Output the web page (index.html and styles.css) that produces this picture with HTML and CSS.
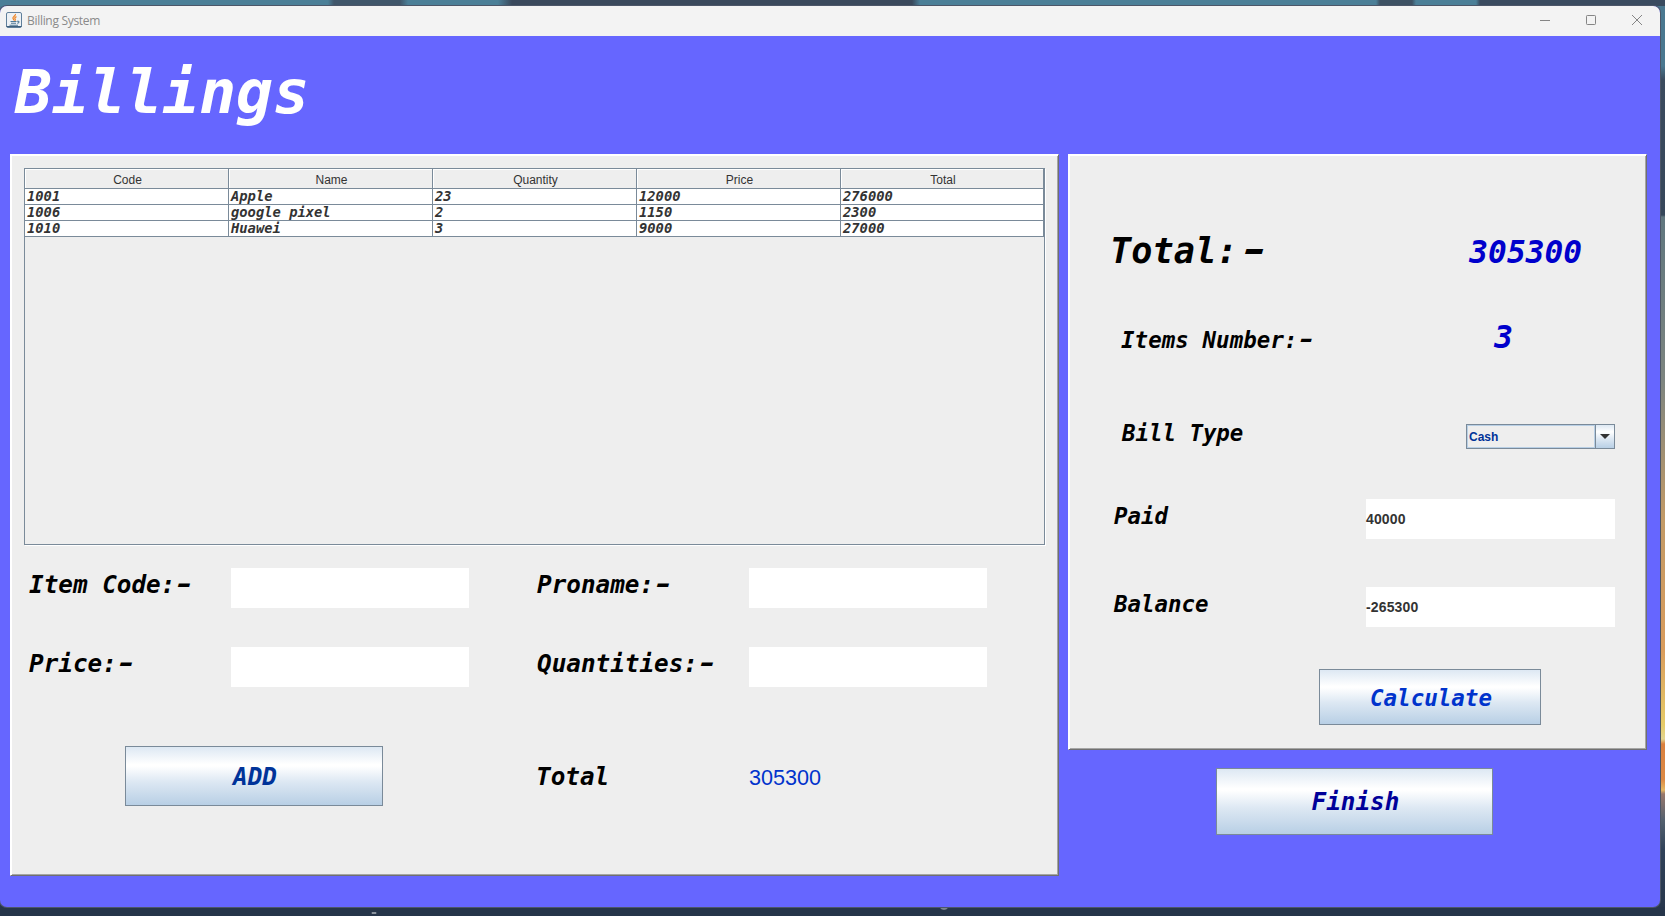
FILE: index.html
```html
<!DOCTYPE html>
<html lang="en">
<head>
<meta charset="utf-8">
<title>Billing System</title>
<link rel="stylesheet" href="styles.css">
</head>
<body>
<div class="desktop">
  <div class="window">
    <header class="titlebar">
      <svg class="app-icon" width="16" height="16" viewBox="0 0 16 16">
        <rect x=".5" y=".5" width="15" height="15" rx="1.5" fill="#edf1f5" stroke="#5f7f9b"/>
        <path d="M0.5 14.5h15" stroke="#3f5f7c"/>
        <path d="M9.5 2c.6 1.700-3 2.600-2.600 4.200.2.900 1.200 1.300.9 2.300M10.500 4.600c-1.700.8-2.200 1.500-1.300 2.500.5.700.1 1.200-.5 1.700" fill="none" stroke="#ee8322" stroke-width="1.200"/>
        <path d="M4.500 9.500h6M5 11.300h5M3.500 13.300h8.500M11 9.300c2.600-.6 2.600 1.700.2 2" fill="none" stroke="#4f7896" stroke-width="1.100"/>
      </svg>
      <span class="caption">Billing System</span>
      <div class="controls">
        <svg width="10" height="10" viewBox="0 0 10 10"><path d="M0 5.500h10" stroke="#858585"/></svg>
        <svg width="10" height="10" viewBox="0 0 10 10"><rect x=".5" y=".5" width="9" height="9" rx=".8" fill="none" stroke="#858585"/></svg>
        <svg width="10" height="10" viewBox="0 0 10 10"><path d="M0 0l10 10M10 0L0 10" stroke="#858585"/></svg>
      </div>
    </header>
    <h1 class="heading">Billings</h1>
    <main class="panels">
      <section class="panel entry">
        <div class="scrollpane">
          <table class="items">
            <colgroup><col><col><col><col><col class="last"></colgroup>
            <thead><tr><th>Code</th><th>Name</th><th>Quantity</th><th>Price</th><th>Total</th></tr></thead>
            <tbody>
              <tr><td>1001</td><td>Apple</td><td>23</td><td>12000</td><td>276000</td></tr>
              <tr><td>1006</td><td>google pixel</td><td>2</td><td>1150</td><td>2300</td></tr>
              <tr><td>1010</td><td>Huawei</td><td>3</td><td>9000</td><td>27000</td></tr>
            </tbody>
          </table>
        </div>
        <div class="form">
          <label class="label">Item Code:<span class="dash">-</span></label><div class="field"></div>
          <label class="label second">Proname:<span class="dash">-</span></label><div class="field"></div>
          <label class="label">Price:<span class="dash">-</span></label><div class="field"></div>
          <label class="label second">Quantities:<span class="dash">-</span></label><div class="field"></div>
        </div>
        <div class="actions">
          <button class="button add">ADD</button>
          <span class="label total-label">Total</span>
          <span class="total-value">305300</span>
        </div>
      </section>
      <div class="side">
        <section class="panel summary">
          <div class="row total-row"><span class="big">Total:<span class="dash">-</span></span><span class="amount">305300</span></div>
          <div class="row count-row"><span>Items Number:<span class="dash">-</span></span><span class="amount">3</span></div>
          <div class="row type-row"><span>Bill Type</span>
            <div class="combo"><span class="combo-value">Cash</span><span class="combo-arrow"><svg width="10" height="5" viewBox="0 0 10 5"><path d="M0 0h10L5 5z" fill="#333"/></svg></span></div>
          </div>
          <div class="row paid-row"><span>Paid</span><div class="field wide">40000</div></div>
          <div class="row balance-row"><span>Balance</span><div class="field wide">-265300</div></div>
          <button class="button calculate">Calculate</button>
        </section>
        <button class="button finish">Finish</button>
      </div>
    </main>
  </div>
</div>
</body>
</html>
```

FILE: styles.css
```css
* { box-sizing: border-box; }

body {
  margin: 0;
  overflow: hidden;
  font-family: "Liberation Sans", Arial, sans-serif;
}

.desktop {
  width: 1665px;
  height: 916px;
  padding: 6px 5px 9px 0;
  background:
    linear-gradient(90deg, #4b7f97 0 328px, #40566a 334px 400px, #4b7f97 408px 498px, #3a495c 512px 912px, #4b7f97 920px 1376px, #3d5163 1380px 1412px, #4b7f97 1416px 1476px, #3a4b5f 1480px) top / 100% 6px no-repeat,
    radial-gradient(ellipse 3px 1.5px at 374px 913px, #8a939e 60%, transparent),
    radial-gradient(ellipse 4px 1.5px at 944px 908.5px, #7d8793 60%, transparent),
    linear-gradient(#26354a, #26354a) bottom / 100% 9px no-repeat,
    linear-gradient(#4a7890 0 66px, #3b4b5e 80px, #36475a 215px, #60777f 217px, #7d8580 380px, #c29a66 520px, #d99c5c 650px, #e6cb68 725px, #e3d590 739px, #d9803f 744px, #dc8a45 780px, #e5b763 790px, #98786c 794px, #54616f 820px, #304259 850px, #26354a);
}

.window {
  width: 1660px;
  height: 901px;
  border-radius: 7px;
  overflow: hidden;
  background: #6666ff;
  box-shadow: 0 0 0 1px #4c5668;
}

.titlebar {
  display: flex;
  align-items: center;
  height: 30px;
  padding: 0 18px 0 6px;
  background: #f3f3f3;
}

.app-icon { margin-top: -2px; }

.caption {
  margin: 0 auto 0 5px;
  font: 12px/16px "Open Sans", sans-serif;
  letter-spacing: -0.3px;
  color: #8a8a8a;
}

.controls {
  display: flex;
  gap: 36px;
  margin-top: -2px;
}

.controls svg { overflow: visible; }

.heading {
  height: 118px;
  margin: 0;
  padding: 21px 0 0 15px;
  font: italic bold 61.2px/70px "DejaVu Sans Mono", monospace;
  color: #fff;
}

.panels {
  display: flex;
  gap: 9px;
  padding-left: 10px;
}

.panel {
  background: #eee;
  border: 1px solid;
  border-color: #fff #707070 #707070 #fff;
  box-shadow: inset 1px 1px #fff, inset -1px -1px #a5a5a5;
}

.entry {
  width: 1049px;
  height: 722px;
  padding: 13px;
}

.scrollpane {
  width: 1021px;
  height: 377px;
  border: 1px solid #7a8a99;
  box-shadow: 1px 1px #fff;
}

.items {
  width: 1019px;
  table-layout: fixed;
  border-collapse: separate;
  border-spacing: 0;
}

.items col { width: 204px; }
.items .last { width: 203px; }

.items th,
.items td {
  padding: 0 0 0 2px;
  border: solid #7a8a99;
  border-width: 0 1px 1px 0;
  color: #333;
  text-align: left;
  white-space: nowrap;
}

.items th {
  height: 20px;
  padding: 3px 0 0 2px;
  font: 12px/16px "Liberation Sans", Arial, sans-serif;
  text-align: center;
  box-shadow: inset 1px 1px #fff;
}

.items td {
  height: 16px;
  background: #fff;
  font: italic bold 13.8px/15px "DejaVu Sans Mono", monospace;
}

.form {
  display: grid;
  grid-template-columns: 202px 238px 280px 238px;
  grid-template-rows: 40px 40px;
  row-gap: 39px;
  margin: 23px 0 0 5px;
}

.label {
  font: italic bold 24.3px/33px "DejaVu Sans Mono", monospace;
  color: #000;
}

.second { padding-left: 68px; }

/* Long dash that closes each label */
.dash {
  display: inline-block;
  transform: translate(-1.5px, -1px) scaleX(1.5);
  transform-origin: left;
}

.big .dash { transform: translate(0.5px, -1px) scaleX(1.55); }

.field {
  height: 40px;
  background: #fff;
}

.actions {
  display: flex;
  margin: 59px 0 0 101px;
  line-height: 60px;
}

.button {
  padding: 2px 0 0 2px;
  border: 1px solid #7a8a99;
  background: linear-gradient(#dde8f3, #fff 30%, #fff 33%, #dde8f3 60%, #b8cfe5);
  font: italic bold 24.3px/1 "DejaVu Sans Mono", monospace;
}

.add {
  width: 258px;
  height: 60px;
  color: #003399;
}

.total-label {
  width: 213px;
  margin-left: 153px;
  padding-top: 1px;
  line-height: 60px;
}

.total-value {
  margin-top: 2px;
  font-size: 21.6px;
  color: #0033cc;
}

.side { width: 579px; }

.summary {
  display: flex;
  flex-direction: column;
  height: 596px;
  padding: 71px 31px 0 45px;
}

.row {
  display: flex;
  flex: none;
  justify-content: space-between;
  font: italic bold 22.4px/35px "DejaVu Sans Mono", monospace;
  color: #000;
}

.amount {
  font-size: 31.2px;
  color: #0000cc;
}

.total-row {
  align-items: baseline;
  height: 50px;
  margin-left: -4px;
  padding-right: 33px;
  line-height: 50px;
}

.big {
  font-size: 35.2px;
  letter-spacing: 0.1px;
}

.count-row {
  align-items: baseline;
  height: 40px;
  margin-top: 41px;
  padding: 0 102px 0 7px;
  line-height: 40px;
}

.count-row > span:first-child { letter-spacing: 0.1px; }

.type-row {
  height: 40px;
  margin-top: 56px;
  padding-left: 8px;
  line-height: 41px;
}

.combo {
  display: flex;
  width: 149px;
  height: 25px;
  margin-top: 11px;
  border: 1px solid #7a8a99;
  font: bold 12px/24px "Liberation Sans", Arial, sans-serif;
  color: #003399;
}

.combo-value {
  flex: 1;
  padding-left: 2px;
  box-shadow: inset 0 0 0 1px #b8cfe5;
}

.combo-arrow {
  display: flex;
  align-items: center;
  justify-content: center;
  width: 19px;
  border-left: 1px solid #7a8a99;
  background: linear-gradient(#dde8f3, #fff 30%, #dde8f3 60%, #b8cfe5);
}

.paid-row { margin-top: 46px; }
.balance-row { margin-top: 48px; }

.wide {
  width: 249px;
  font: bold 14px/41px "Liberation Sans", Arial, sans-serif;
  letter-spacing: 0.15px;
  color: #333;
}

.calculate {
  flex: none;
  width: 222px;
  height: 56px;
  margin: 42px 0 0 205px;
  font-size: 22.5px;
  color: #0033cc;
}

.finish {
  display: block;
  width: 277px;
  height: 67px;
  margin: 18px 0 0 148px;
  color: #000099;
}
```
